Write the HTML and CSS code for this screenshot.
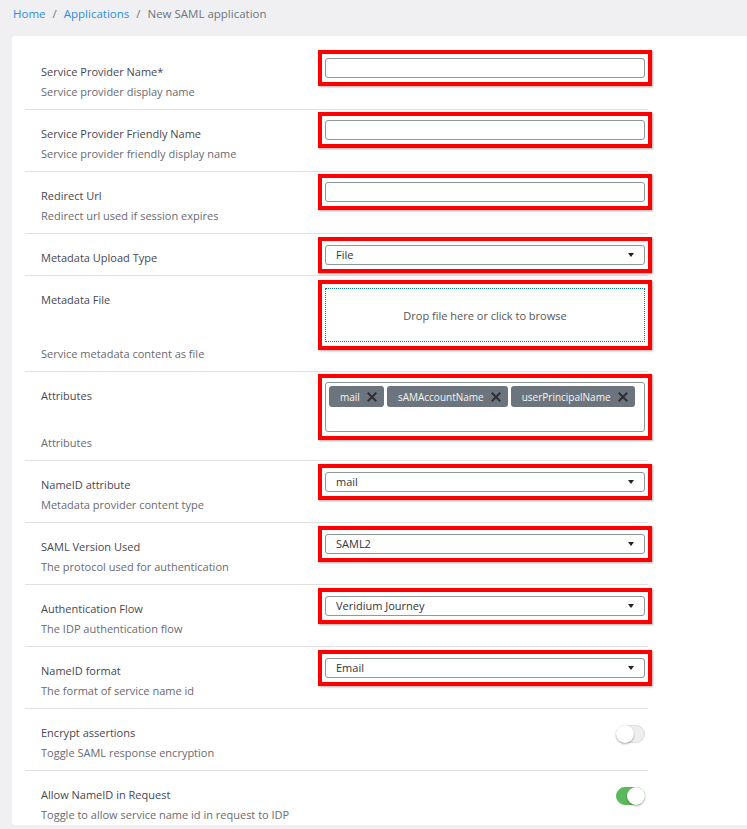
FILE: index.html
```html
<!DOCTYPE html>
<html lang="en">
<head>
  <meta charset="UTF-8">
  <title>New SAML application</title>
  <link rel="stylesheet" href="styles.css">
</head>
<body>

  <div class="crumbs">
    <a href="#">Home</a><span class="sep">/</span><a href="#">Applications</a><span class="sep">/</span><span class="current">New SAML application</span>
  </div>

  <div class="card">
    <form class="saml-form" id="samlForm">

      <div class="row">
        <div class="info">
          <label for="sp_name">Service Provider Name*</label>
          <div class="desc">Service provider display name</div>
        </div>
        <div class="control"><div class="mark"><input type="text" id="sp_name"></div></div>
      </div>

      <div class="row">
        <div class="info">
          <label for="sp_friendly">Service Provider Friendly Name</label>
          <div class="desc">Service provider friendly display name</div>
        </div>
        <div class="control"><div class="mark"><input type="text" id="sp_friendly"></div></div>
      </div>

      <div class="row">
        <div class="info">
          <label for="redirect">Redirect Url</label>
          <div class="desc">Redirect url used if session expires</div>
        </div>
        <div class="control"><div class="mark"><input type="text" id="redirect"></div></div>
      </div>

      <div class="row row-compact">
        <div class="info">
          <label>Metadata Upload Type</label>
        </div>
        <div class="control"><div class="mark"><div class="select">File</div></div></div>
      </div>

      <div class="row">
        <div class="info">
          <label>Metadata File</label>
          <div class="desc">Service metadata content as file</div>
        </div>
        <div class="control control-drop"><div class="mark"><div class="dropzone">Drop file here or click to browse</div></div></div>
      </div>

      <div class="row">
        <div class="info">
          <label>Attributes</label>
          <div class="desc">Attributes</div>
        </div>
        <div class="control control-tags">
          <div class="mark">
            <div class="tags">
              <span class="tag">mail<span class="x"></span></span>
              <span class="tag">sAMAccountName<span class="x"></span></span>
              <span class="tag">userPrincipalName<span class="x"></span></span>
            </div>
          </div>
        </div>
      </div>

      <div class="row">
        <div class="info">
          <label>NameID attribute</label>
          <div class="desc">Metadata provider content type</div>
        </div>
        <div class="control"><div class="mark"><div class="select">mail</div></div></div>
      </div>

      <div class="row">
        <div class="info">
          <label>SAML Version Used</label>
          <div class="desc">The protocol used for authentication</div>
        </div>
        <div class="control"><div class="mark"><div class="select">SAML2</div></div></div>
      </div>

      <div class="row">
        <div class="info">
          <label>Authentication Flow</label>
          <div class="desc">The IDP authentication flow</div>
        </div>
        <div class="control"><div class="mark"><div class="select">Veridium Journey</div></div></div>
      </div>

      <div class="row">
        <div class="info">
          <label>NameID format</label>
          <div class="desc">The format of service name id</div>
        </div>
        <div class="control"><div class="mark"><div class="select">Email</div></div></div>
      </div>

      <div class="row">
        <div class="info">
          <label>Encrypt assertions</label>
          <div class="desc">Toggle SAML response encryption</div>
        </div>
        <div class="control control-toggle"><span class="toggle"></span></div>
      </div>

      <div class="row row-last">
        <div class="info">
          <label>Allow NameID in Request</label>
          <div class="desc">Toggle to allow service name id in request to IDP</div>
        </div>
        <div class="control control-toggle"><span class="toggle on"></span></div>
      </div>

    </form>
  </div>

</body>
</html>
```

FILE: styles.css
```css
body {
  margin: 0;
  background-color: #f0f0f2;
  font-family: "Open Sans", "Liberation Sans", sans-serif;
  font-size: 11px;
  color: #4a4a55;
}

.crumbs {
  padding: 6px 13px 0;
  height: 30px;
  font-size: 11.5px;
  color: #6c757d;
}

.crumbs a {
  color: #2d8ce6;
  text-decoration: none;
}

.crumbs .sep {
  margin: 0 7px;
  color: #777;
}

.card {
  margin-left: 12px;
  background-color: #fff;
  border-radius: 3px 0 0 3px;
  padding: 12px 0 0 13px;
}

.saml-form {
  width: 623px;
}

.row {
  display: grid;
  grid-template-columns: 1fr 320px;
  padding: 10px 3px 7px 16px;
  border-bottom: 1px solid #e0e0e0;
}

.row-compact {
  padding-bottom: 9px;
}

.row-last {
  border-bottom: none;
  padding-bottom: 0;
}

.info {
  display: flex;
  flex-direction: column;
  justify-content: space-between;
  padding-top: 6px;
}

.info label {
  display: block;
  line-height: 16px;
  color: #474752;
}

.desc {
  line-height: 20px;
  margin-top: 2px;
  color: #6a6a72;
}

.mark {
  position: relative;
}

.mark::after {
  content: "";
  position: absolute;
  top: -8px;
  right: -7px;
  bottom: -8px;
  left: -7px;
  border: 4px solid #ff0000;
  box-shadow: 1px 1px 2px rgba(0, 0, 0, 0.35);
  pointer-events: none;
}

.control input[type="text"] {
  display: block;
  width: 100%;
  height: 20px;
  margin: 0;
  border: 1px solid #8e9a9a;
  border-radius: 3px;
  box-sizing: border-box;
  font: inherit;
}

.select {
  position: relative;
  height: 20px;
  margin-top: 1px;
  padding-left: 10px;
  border: 1px solid #8e9a9a;
  border-radius: 3px;
  box-sizing: border-box;
  line-height: 18px;
  color: #333;
}

.select::after {
  content: "";
  position: absolute;
  right: 10px;
  top: 7px;
  border-left: 3px solid transparent;
  border-right: 3px solid transparent;
  border-top: 4px solid #222;
}

.control-drop .mark {
  margin: 2px 0 22px;
}

.dropzone {
  height: 54px;
  border: 1px dotted #0a74d0;
  box-sizing: border-box;
  display: flex;
  align-items: center;
  justify-content: center;
  color: #555;
}

.control-tags .mark {
  margin-bottom: 21px;
}

.tags {
  height: 50px;
  border: 1px solid #8e9a9a;
  border-radius: 3px;
  box-sizing: border-box;
  padding: 3px;
  display: flex;
  align-items: flex-start;
  gap: 3px;
}

.tag {
  display: inline-flex;
  align-items: center;
  height: 21px;
  padding: 0 7px 0 11px;
  background-color: #6c757d;
  border-radius: 3px;
  color: #f4f4f4;
  font-size: 10px;
}

.tag .x {
  position: relative;
  width: 10px;
  height: 10px;
  margin-left: 7px;
}

.tag .x::before,
.tag .x::after {
  content: "";
  position: absolute;
  left: -1px;
  top: 4px;
  width: 12px;
  height: 2px;
  background-color: #2f2f33;
  transform: rotate(45deg);
}

.tag .x::after {
  transform: rotate(-45deg);
}

.control-toggle {
  display: flex;
  justify-content: flex-end;
  padding-top: 6px;
}

.toggle {
  position: relative;
  width: 29px;
  height: 18px;
  border-radius: 9px;
  background-color: #eeeeee;
  border: 1px solid #dddddd;
  box-sizing: border-box;
}

.toggle::after {
  content: "";
  position: absolute;
  top: -1px;
  left: -1px;
  width: 18px;
  height: 18px;
  border-radius: 50%;
  background-color: #fff;
  box-shadow: 0 1px 2px rgba(0, 0, 0, 0.35);
}

.toggle.on {
  background-color: #5cb85c;
  border-color: #5cb85c;
}

.toggle.on::after {
  left: auto;
  right: -1px;
}
```
